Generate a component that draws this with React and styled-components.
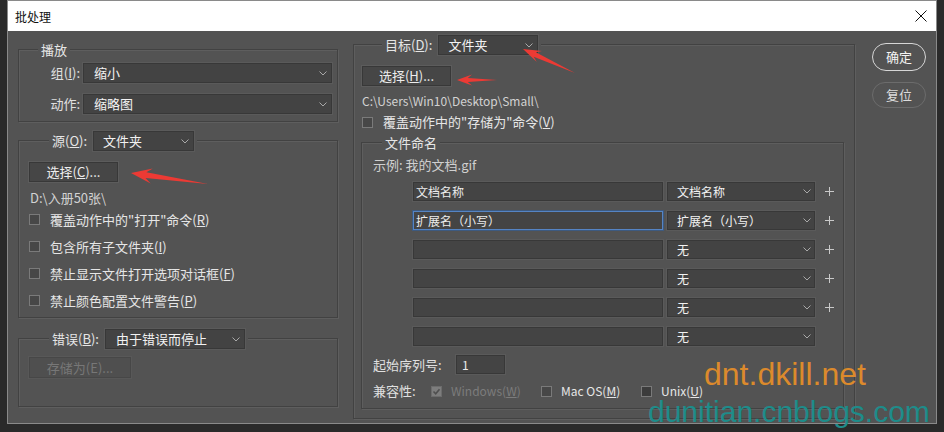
import React from 'react';
import styled, { createGlobalStyle, css } from 'styled-components';

const GlobalStyle = createGlobalStyle`
  html, body {
    margin: 0;
    padding: 0;
    background: #2a2a2a;
  }
  body {
    font-family: "Noto Sans CJK SC", "Liberation Sans", sans-serif;
  }
`;

const Page = styled.div`
  position: relative;
  width: 944px;
  height: 432px;
  overflow: hidden;
  background: #2a2a2a;
`;

const Window = styled.div`
  margin-left: 7px;
  width: 930px;
  height: 424px;
  box-sizing: border-box;
  border: 1px solid #8a8a8a;
  display: flex;
  flex-direction: column;
`;

const TitleBar = styled.div`
  flex: none;
  height: 30px;
  background: #fff;
  display: flex;
  align-items: center;
  justify-content: space-between;
  padding: 0 9px 0 7px;
  font-size: 12px;
  color: #111;
`;

const Body = styled.div`
  flex: 1;
  display: flex;
  align-items: flex-start;
  padding-left: 10px;
  background: #535353;
  color: #e2e2e2;
  font-size: 13px;
  line-height: 16px;
`;

const LeftColumn = styled.div`
  width: 320px;
  padding-top: 18px;
`;

const RightColumn = styled.div`
  width: 502px;
  margin-left: 15px;
  padding-top: 13px;
`;

const ActionColumn = styled.div`
  width: 54px;
  margin-left: 17px;
  padding-top: 12px;
  display: flex;
  flex-direction: column;
  gap: 11px;
`;

const Group = styled.div`
  box-sizing: border-box;
  width: ${p => p.$w}px;
  margin: ${p => p.$m || '0'};
  padding: ${p => p.$pad || '0'};
  border: 1px solid #424242;
  box-shadow: inset 1px 1px 0 #5e5e5e, 1px 1px 0 #5e5e5e;
`;

const GroupTitle = styled.div`
  display: flex;
  align-items: center;
  gap: 6px;
  width: max-content;
  height: ${p => p.$h}px;
  margin: ${p => -p.$h / 2}px 0 0 ${p => p.$x}px;
  padding: 0 3px;
  background: #535353;
  color: #e6e6e6;
`;

const FieldRow = styled.div`
  display: flex;
  align-items: center;
  margin-top: ${p => p.$mt || 0}px;
`;

const FieldLabel = styled.span`
  width: ${p => p.$w}px;
  flex: none;
  text-align: ${p => p.$right ? 'right' : 'left'};
  color: #e0e0e0;
`;

const Select = styled.div`
  box-sizing: border-box;
  width: ${p => p.$w}px;
  height: ${p => p.$h || 20}px;
  margin-left: ${p => p.$ml || 0}px;
  flex: none;
  display: flex;
  align-items: center;
  padding: 0 ${p => p.$pr || 4}px 0 ${p => p.$pl || 10}px;
  background: #434343;
  border: 1px solid #383838;
  box-shadow: 0 0 0 1px #5a5a5a;
  color: #f2f2f2;
  font-size: ${p => p.$fs || 13}px;
  svg {
    margin-left: auto;
  }
`;

const Button = styled.div`
  box-sizing: border-box;
  width: ${p => p.$w}px;
  height: ${p => p.$h || 20}px;
  margin-top: ${p => p.$mt || 0}px;
  display: flex;
  align-items: center;
  justify-content: center;
  background: ${p => p.$disabled ? '#4f4f4f' : '#464646'};
  border: 1px solid ${p => p.$disabled ? '#474747' : '#383838'};
  box-shadow: 0 0 0 1px ${p => p.$disabled ? '#585858' : '#5c5c5c'};
  color: ${p => p.$disabled ? '#777' : '#ededed'};
`;

const PathText = styled.div`
  margin: ${p => p.$m};
  color: #d2d2d2;
  font-size: ${p => p.$fs || 12}px;
`;

const CheckRow = styled.div`
  display: flex;
  align-items: center;
  gap: 10px;
  height: ${p => p.$h || 27}px;
  margin-top: ${p => p.$mt || 0}px;
  color: #e6e6e6;
`;

const CheckBox = styled.span`
  flex: none;
  box-sizing: border-box;
  width: 11px;
  height: 11px;
  display: flex;
  align-items: center;
  justify-content: center;
  border: 1px solid ${p => p.$disabled ? '#6c6c6c' : '#7a7a7a'};
  background: ${p => p.$checked ? '#7d7d7d' : p.$dark ? '#3c3c3c' : '#474747'};
`;

const Key = styled.u`
  text-underline-offset: 1px;
`;

const Hint = styled.div`
  margin-top: 6px;
  color: #d0d0d0;
  font-size: 13px;
`;

const NameRows = styled.div`
  margin: 9px 0 0 40px;
  display: flex;
  flex-direction: column;
  gap: 10px;
`;

const NameRow = styled.div`
  display: flex;
  align-items: center;
  height: 19px;
`;

const TextField = styled.div`
  box-sizing: border-box;
  width: ${p => p.$w}px;
  height: 19px;
  flex: none;
  padding-left: ${p => p.$pl || 2}px;
  background: #444;
  border: 1px solid #383838;
  box-shadow: 0 0 0 1px #5a5a5a;
  color: #ececec;
  font-size: 12px;
  line-height: 17px;
  ${p => p.$focus && css`
    border-color: #5584c4;
    box-shadow: 0 0 0 1px #3d5a80;
  `}
`;

const PlusSign = styled.span`
  width: 9px;
  margin-left: 10px;
  display: flex;
`;

const Options = styled.div`
  display: flex;
  align-items: center;
`;

const Option = styled.span`
  display: flex;
  align-items: center;
  gap: 9px;
  width: ${p => p.$w ? `${p.$w}px` : 'auto'};
  color: ${p => p.$disabled ? '#7c7c7c' : '#e6e6e6'};
  font-size: 12px;
`;

const PillButton = styled.div`
  box-sizing: border-box;
  height: ${p => p.$h}px;
  display: flex;
  align-items: center;
  justify-content: center;
  border-radius: 14px;
  border: 1.5px solid ${p => p.$primary ? '#d6d6d6' : '#6c6c6c'};
  color: ${p => p.$primary ? '#f4f4f4' : '#dcdcdc'};
  font-size: 13px;
`;

const Watermark = styled.span`
  position: absolute;
  left: ${p => p.$x}px;
  top: ${p => p.$y}px;
  font-family: "Liberation Sans", Arial, sans-serif;
  font-size: ${p => p.$size}px;
  line-height: 1;
  color: ${p => p.$color};
  white-space: nowrap;
  pointer-events: none;
`;

const ArrowLayer = styled.svg`
  position: absolute;
  left: 0;
  top: 0;
  pointer-events: none;
`;

const Chevron = () => (
  <svg width="8" height="5" viewBox="0 0 8 5">
    <path d="M0.5 0.5 L4 4 L7.5 0.5" fill="none" stroke="#a9a9a9" strokeWidth="1" />
  </svg>
);

const Plus = () => (
  <svg width="9" height="9" viewBox="0 0 9 9">
    <path d="M4.5 0 V9 M0 4.5 H9" stroke="#c9c9c9" strokeWidth="1" />
  </svg>
);

const Tick = () => (
  <svg width="9" height="9" viewBox="0 0 9 9">
    <path d="M1.5 4.5 L3.7 6.7 L7.5 2.2" fill="none" stroke="#4f4f4f" strokeWidth="1.6" />
  </svg>
);

function arrowPoints([tx, ty], [sx, sy], headLen, headW, shaftW) {
  const len = Math.hypot(sx - tx, sy - ty);
  const ux = (sx - tx) / len;
  const uy = (sy - ty) / len;
  const nx = -uy;
  const ny = ux;
  const p = (a, b) => `${(tx + ux * a + nx * b).toFixed(1)},${(ty + uy * a + ny * b).toFixed(1)}`;
  return [
    p(0, 0),
    p(headLen, headW / 2),
    p(headLen * 0.72, shaftW / 2),
    `${sx},${sy}`,
    p(headLen * 0.72, -shaftW / 2),
    p(headLen, -headW / 2),
  ].join(' ');
}

const arrows = [
  { tip: [131, 173], tail: [208, 184], head: 21, w: 15, shaft: 6 },
  { tip: [523, 49], tail: [575, 73], head: 18, w: 12, shaft: 5 },
  { tip: [457, 80], tail: [497, 80], head: 15, w: 11, shaft: 4 },
];

const nameRows = [
  { text: '文档名称', pick: '文档名称' },
  { text: '扩展名（小写）', pick: '扩展名（小写）', focus: true },
  { text: '', pick: '无' },
  { text: '', pick: '无' },
  { text: '', pick: '无' },
  { text: '', pick: '无', last: true },
];

const sourceChecks = [
  <>覆盖动作中的"打开"命令(<Key>R</Key>)</>,
  <>包含所有子文件夹(<Key>I</Key>)</>,
  <>禁止显示文件打开选项对话框(<Key>F</Key>)</>,
  <>禁止颜色配置文件警告(<Key>P</Key>)</>,
];

export default function App() {
  return (
    <Page>
      <GlobalStyle />
      <Window>
        <TitleBar>
          <span>批处理</span>
          <svg width="12" height="12" viewBox="0 0 12 12">
            <path d="M0.5 0.5 L11.5 11.5 M11.5 0.5 L0.5 11.5" stroke="#111" strokeWidth="1" />
          </svg>
        </TitleBar>
        <Body>
          <LeftColumn>
            <Group $w={320} $pad="0 4px 7px 0">
              <GroupTitle $h={16} $x={19}>播放</GroupTitle>
              <FieldRow $mt={5}>
                <FieldLabel $w={61} $right>组(<Key>I</Key>):</FieldLabel>
                <Select $w={249} $ml={3}>缩小<Chevron /></Select>
              </FieldRow>
              <FieldRow $mt={11}>
                <FieldLabel $w={61} $right>动作:</FieldLabel>
                <Select $w={249} $ml={3}>缩略图<Chevron /></Select>
              </FieldRow>
            </Group>

            <Group $w={320} $m="18px 0 0" $pad="0 0 3px 10px">
              <GroupTitle $h={20} $x={20}>
                <span>源(<Key>O</Key>):</span>
                <Select $w={101} $pl={9}>文件夹<Chevron /></Select>
              </GroupTitle>
              <Button $w={89} $mt={11}>选择(<Key>C</Key>)...</Button>
              <PathText $m="8px 0 0 1px" $fs={13}>D:\入册50张\</PathText>
              {sourceChecks.map((label, i) => (
                <CheckRow key={i}>
                  <CheckBox />
                  <span>{label}</span>
                </CheckRow>
              ))}
            </Group>

            <Group $w={320} $m="20px 0 0" $pad="0 0 28px 10px">
              <GroupTitle $h={20} $x={20}>
                <span>错误(<Key>B</Key>):</span>
                <Select $w={140} $pl={10}>由于错误而停止<Chevron /></Select>
              </GroupTitle>
              <Button $w={102} $h={21} $mt={8} $disabled>存储为(E)...</Button>
            </Group>
          </LeftColumn>

          <RightColumn>
            <Group $w={502} $pad="0 0 9px 8px">
              <GroupTitle $h={20} $x={20}>
                <span>目标(<Key>D</Key>):</span>
                <Select $w={100} $pl={9}>文件夹<Chevron /></Select>
              </GroupTitle>
              <Button $w={89} $mt={11}>选择(<Key>H</Key>)...</Button>
              <PathText $m="7px 0 0">C:\Users\Win10\Desktop\Small\</PathText>
              <CheckRow $h={16} $mt={5}>
                <CheckBox />
                <span>覆盖动作中的"存储为"命令(<Key>V</Key>)</span>
              </CheckRow>

              <Group $w={483} $m="12px 0 0 -1px" $pad="0 0 9px 11px">
                <GroupTitle $h={16} $x={9}>文件命名</GroupTitle>
                <Hint>示例: 我的文档.gif</Hint>
                <NameRows>
                  {nameRows.map((row, i) => (
                    <NameRow key={i}>
                      <TextField $w={250} $focus={row.focus}>{row.text}</TextField>
                      <Select $w={148} $h={19} $ml={4} $pl={9} $pr={3} $fs={12}>{row.pick}<Chevron /></Select>
                      {!row.last && <PlusSign><Plus /></PlusSign>}
                    </NameRow>
                  ))}
                </NameRows>
                <FieldRow $mt={9}>
                  <FieldLabel $w={83}>起始序列号:</FieldLabel>
                  <TextField $w={49} $pl={5}>1</TextField>
                </FieldRow>
                <FieldRow $mt={9}>
                  <FieldLabel $w={58}>兼容性:</FieldLabel>
                  <Options>
                    <Option $w={110} $disabled>
                      <CheckBox $checked $disabled><Tick /></CheckBox>
                      <span>Windows(<Key>W</Key>)</span>
                    </Option>
                    <Option $w={100}>
                      <CheckBox />
                      <span>Mac OS(<Key>M</Key>)</span>
                    </Option>
                    <Option>
                      <CheckBox $dark />
                      <span>Unix(<Key>U</Key>)</span>
                    </Option>
                  </Options>
                </FieldRow>
              </Group>
            </Group>
          </RightColumn>

          <ActionColumn>
            <PillButton $h={28} $primary>确定</PillButton>
            <PillButton $h={26}>复位</PillButton>
          </ActionColumn>
        </Body>
      </Window>

      <ArrowLayer width="944" height="432" viewBox="0 0 944 432">
        {arrows.map((a, i) => (
          <polygon key={i} points={arrowPoints(a.tip, a.tail, a.head, a.w, a.shaft)} fill="#ec3a34" />
        ))}
      </ArrowLayer>

      <Watermark $x={704} $y={358} $size={32} $color="#dc8a2c">dnt.dkill.net</Watermark>
      <Watermark $x={648} $y={397} $size={30} $color="#1e8c8a">dunitian.cnblogs.com</Watermark>
    </Page>
  );
}
